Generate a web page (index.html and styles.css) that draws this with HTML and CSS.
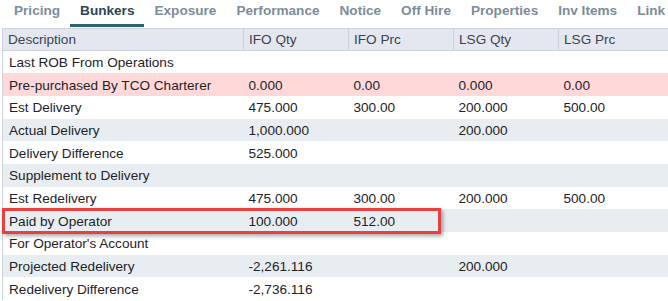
FILE: index.html
```html
<!DOCTYPE html>
<html>
<head>
<meta charset="utf-8">
<link rel="stylesheet" href="styles.css">
</head>
<body>
<nav class="tabs">
  <span class="tab">Pricing</span>
  <span class="tab active">Bunkers</span>
  <span class="tab">Exposure</span>
  <span class="tab">Performance</span>
  <span class="tab">Notice</span>
  <span class="tab">Off Hire</span>
  <span class="tab">Properties</span>
  <span class="tab">Inv Items</span>
  <span class="tab">Link</span>
</nav>
<div class="grid-wrap">
  <table class="grid">
    <colgroup>
      <col class="c-desc"><col class="c-num"><col class="c-num2"><col class="c-num"><col>
    </colgroup>
    <thead>
      <tr><th>Description</th><th>IFO Qty</th><th>IFO Prc</th><th>LSG Qty</th><th>LSG Prc</th></tr>
    </thead>
    <tbody>
      <tr><td>Last ROB From Operations</td><td></td><td></td><td></td><td></td></tr>
      <tr class="warn"><td>Pre-purchased By TCO Charterer</td><td>0.000</td><td>0.00</td><td>0.000</td><td>0.00</td></tr>
      <tr><td>Est Delivery</td><td>475.000</td><td>300.00</td><td>200.000</td><td>500.00</td></tr>
      <tr class="alt"><td>Actual Delivery</td><td>1,000.000</td><td></td><td>200.000</td><td></td></tr>
      <tr><td>Delivery Difference</td><td>525.000</td><td></td><td></td><td></td></tr>
      <tr class="alt"><td>Supplement to Delivery</td><td></td><td></td><td></td><td></td></tr>
      <tr><td>Est Redelivery</td><td>475.000</td><td>300.00</td><td>200.000</td><td>500.00</td></tr>
      <tr class="alt"><td>Paid by Operator</td><td>100.000</td><td>512.00</td><td></td><td></td></tr>
      <tr><td>For Operator's Account</td><td></td><td></td><td></td><td></td></tr>
      <tr class="alt"><td>Projected Redelivery</td><td>-2,261.116</td><td></td><td>200.000</td><td></td></tr>
      <tr><td>Redelivery Difference</td><td>-2,736.116</td><td></td><td></td><td></td></tr>
    </tbody>
  </table>
  <div class="highlight"></div>
</div>
</body>
</html>
```
FILE: styles.css
```css
* { box-sizing: border-box; }
html, body { margin: 0; padding: 0; background: #fff; overflow: hidden; }
body {
  font-family: "Liberation Sans", Arial, sans-serif;
  font-size: 13.6px;
  color: #1f2329;
  width: 668px;
  height: 301px;
}
.tabs {
  display: flex;
  height: 28px;
  padding-left: 4px;
  white-space: nowrap;
}
.tab {
  padding: 3px 10px 0;
  font-weight: bold;
  color: #7d8c9a;
  border-bottom: 3px solid transparent;
  height: 27px;
}
.tab.active {
  color: #2b4556;
  border-bottom-color: #2f6175;
}
.grid-wrap {
  position: relative;
  margin-left: 2px;
}
.grid {
  border-collapse: collapse;
  width: 680px;
  table-layout: fixed;
}
.c-desc { width: 241px; }
.c-num { width: 105px; }
.c-num2 { width: 105px; }
.grid th {
  background: #e4e7ef;
  color: #3a4452;
  font-weight: normal;
  text-align: left;
  height: 22px;
  padding: 0 5px 1px;
  border: 1px solid #cdd1da;
}
.grid td {
  height: 22.7px;
  padding: 1px 5px 0;
  white-space: nowrap;
}
.grid tbody td:first-child { border-left: 1px solid #cdd1da; padding-left: 6px; }
.grid tr.alt td { background: #e7edf0; }
.grid tr.warn td { background: #ffd9d9; }
.highlight {
  position: absolute;
  left: 0;
  top: 180px;
  width: 439px;
  height: 26px;
  border: 3px solid #e8403f;
  box-shadow: 2px 2px 4px rgba(0,0,0,0.35);
}
```
